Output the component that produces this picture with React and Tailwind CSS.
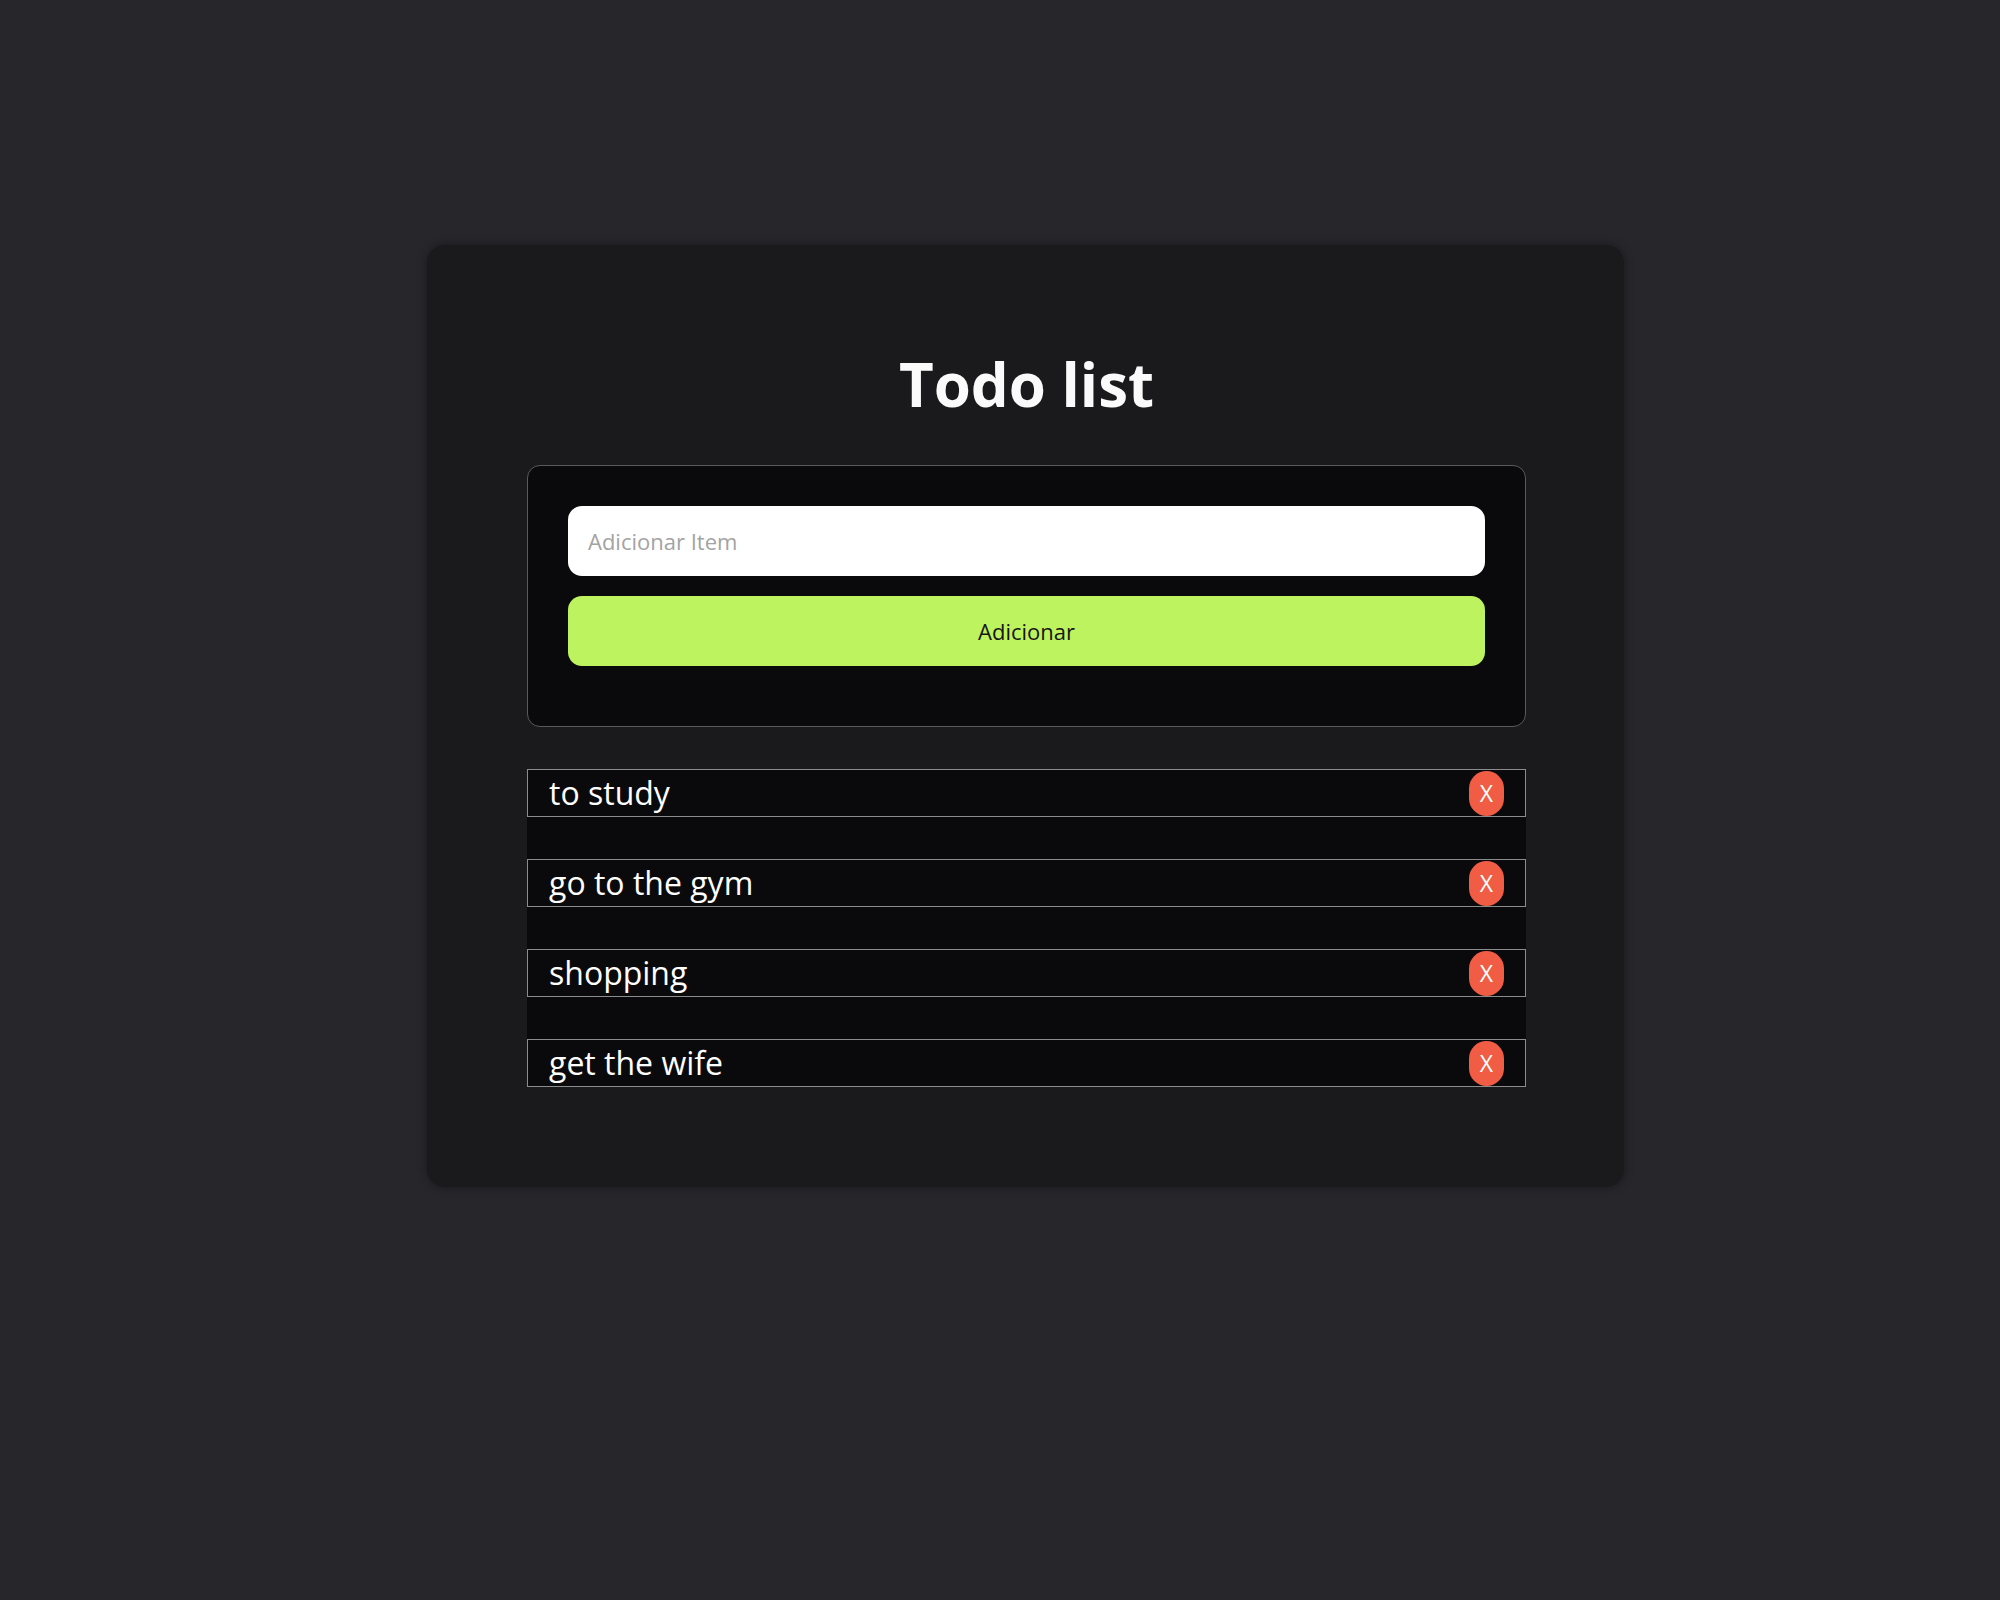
import { useState } from "react"

const initialItems = ["to study", "go to the gym", "shopping", "get the wife"]

export default function App() {
  const [items, setItems] = useState(initialItems)
  const [text, setText] = useState("")

  const handleAdd = () => {
    if (!text.trim()) return
    setItems([...items, text.trim()])
    setText("")
  }

  const handleRemove = (index) => {
    setItems(items.filter((_, i) => i !== index))
  }

  return (
    <div
      className="min-h-screen bg-[#26262b] pt-[245px] pb-20"
      style={{ fontFamily: '"Open Sans", "Noto Sans", sans-serif' }}
    >
      <div className="ml-[427px] w-[1197px] rounded-[18px] bg-[#1a1a1c] pl-[100px] pr-[98px] pt-[97px] pb-[100px] shadow-[0_0_10px_rgba(0,0,0,0.35)]">
        <h1 className="mb-[39px] text-center text-[60px] font-bold leading-[84px] text-[#fafafa]">Todo list</h1>

        {/* Add form */}
        <div className="flex flex-col gap-5 rounded-[13px] border border-[#5a5a5c] bg-[#0a0a0c] px-10 pt-10 pb-[60px]">
          <input
            type="text"
            value={text}
            onChange={(e) => setText(e.target.value)}
            placeholder="Adicionar Item"
            className="h-[70px] w-full rounded-[14px] bg-white px-5 text-[22px] text-[#222] outline-none placeholder:text-[#a3a3a3]"
          />
          <button
            onClick={handleAdd}
            className="h-[70px] w-full rounded-[14px] bg-[#bdf35e] text-[22px] text-[#161616]"
          >
            Adicionar
          </button>
        </div>

        {/* List */}
        <ul className="mt-[42px] flex flex-col gap-[42px] bg-[#0a0a0c]">
          {items.map((item, index) => (
            <li
              key={index}
              className="flex h-[48px] items-center justify-between border border-[#8c8c8c] bg-[#0a0a0c] pl-[21px] pr-[21px]"
            >
              <span className="text-[32px] leading-[44px] text-white">{item}</span>
              <button
                onClick={() => handleRemove(index)}
                className="flex h-[45px] w-[35px] items-center justify-center rounded-full bg-[#f05c44] text-[23px] leading-none text-white"
              >
                X
              </button>
            </li>
          ))}
        </ul>
      </div>
    </div>
  )
}
